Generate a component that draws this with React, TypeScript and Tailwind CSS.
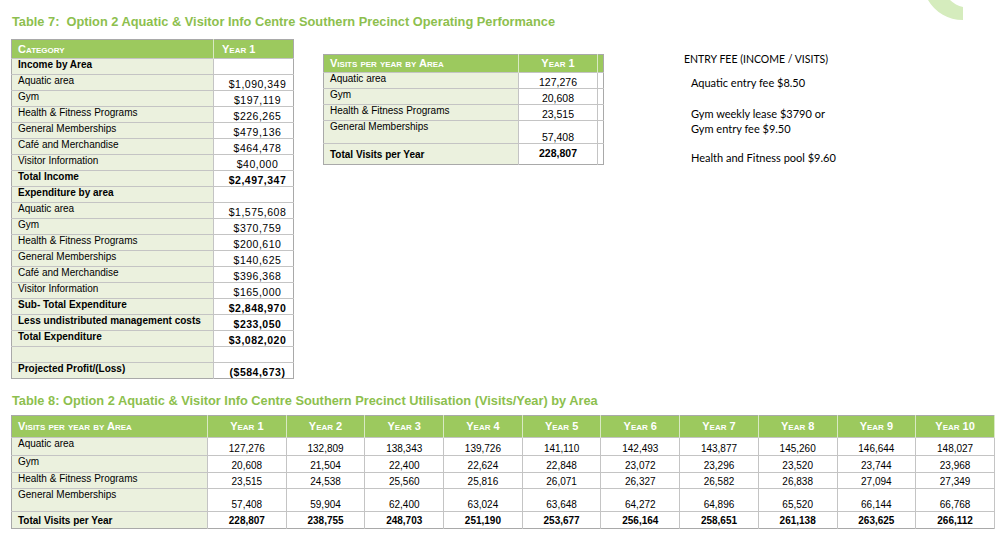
import React from 'react'

const tableFont = { fontFamily: '"Liberation Sans", Arial, sans-serif' }

type Row7 = { label: string; value: string; bold?: boolean }

const rows7: Row7[] = [
    { label: 'Income by Area', value: '', bold: true },
    { label: 'Aquatic area', value: '$1,090,349' },
    { label: 'Gym', value: '$197,119' },
    { label: 'Health & Fitness Programs', value: '$226,265' },
    { label: 'General Memberships', value: '$479,136' },
    { label: 'Café and Merchandise', value: '$464,478' },
    { label: 'Visitor Information', value: '$40,000' },
    { label: 'Total Income', value: '$2,497,347', bold: true },
    { label: 'Expenditure by area', value: '', bold: true },
    { label: 'Aquatic area', value: '$1,575,608' },
    { label: 'Gym', value: '$370,759' },
    { label: 'Health & Fitness Programs', value: '$200,610' },
    { label: 'General Memberships', value: '$140,625' },
    { label: 'Café and Merchandise', value: '$396,368' },
    { label: 'Visitor Information', value: '$165,000' },
    { label: 'Sub- Total Expenditure', value: '$2,848,970', bold: true },
    { label: 'Less undistributed management costs', value: '$233,050', bold: true },
    { label: 'Total Expenditure', value: '$3,082,020', bold: true },
    { label: '', value: '' },
    { label: 'Projected Profit/(Loss)', value: '($584,673)', bold: true },
]

const visitRows = [
    { label: 'Aquatic area', h: 'h-[18px]', v: ['127,276', '132,809', '138,343', '139,726', '141,110', '142,493', '143,877', '145,260', '146,644', '148,027'] },
    { label: 'Gym', h: 'h-[17px]', v: ['20,608', '21,504', '22,400', '22,624', '22,848', '23,072', '23,296', '23,520', '23,744', '23,968'] },
    { label: 'Health & Fitness Programs', h: 'h-[16px]', v: ['23,515', '24,538', '25,560', '25,816', '26,071', '26,327', '26,582', '26,838', '27,094', '27,349'] },
    { label: 'General Memberships', h: 'h-[23px]', v: ['57,408', '59,904', '62,400', '63,024', '63,648', '64,272', '64,896', '65,520', '66,144', '66,768'] },
]

const totals = ['228,807', '238,755', '248,703', '251,190', '253,677', '256,164', '258,651', '261,138', '263,625', '266,112']

function Corner() {
    return (
        <svg className="absolute top-0 right-0" width="100" height="30" viewBox="900 0 100 30">
            <path d="M 928 0 A 40 40 0 0 0 963 20 L 963 7 A 27 27 0 0 1 950 0 Z" fill="#d5ecbd" />
        </svg>
    )
}

function Table7() {
    return (
        <table className="w-[282px] border-collapse table-fixed border border-[#a9a9a9] text-[10px] text-black" style={tableFont}>
            <colgroup>
                <col className="w-[202px]" />
                <col className="w-[80px]" />
            </colgroup>
            <thead>
                <tr className="h-[19px] bg-[#9cc95e] text-white font-bold text-[11px] [font-variant:small-caps]">
                    <th className="text-left pl-[6px] border-r border-[#d9e9c4]">Category</th>
                    <th className="text-left pl-[8px]">Year 1</th>
                </tr>
            </thead>
            <tbody>
                {rows7.map((r, i) => (
                    <tr key={i} className={`h-[16px] border-t border-[#c4c4c4] ${r.bold ? 'font-bold' : ''}`}>
                        <td className="bg-[#ebf1de] align-top pl-[6px] leading-[12px] border-r border-[#c4c4c4] whitespace-nowrap">{r.label}</td>
                        <td className="bg-white align-bottom text-center leading-[12px] pl-[8px] text-[10.5px] tracking-[0.5px]">{r.value}</td>
                    </tr>
                ))}
            </tbody>
        </table>
    )
}

function VisitsSmall() {
    return (
        <table className="w-[280px] border-collapse table-fixed border border-[#a9a9a9] text-[10px] text-black" style={tableFont}>
            <colgroup>
                <col className="w-[195px]" />
                <col className="w-[79px]" />
                <col className="w-[6px]" />
            </colgroup>
            <thead>
                <tr className="h-[18px] bg-[#9cc95e] text-white font-bold text-[11px] [font-variant:small-caps]">
                    <th className="text-left pl-[6px] border-r border-[#d9e9c4]">Visits per year by Area</th>
                    <th className="text-center border-r border-[#d9e9c4]">Year 1</th>
                    <th></th>
                </tr>
            </thead>
            <tbody>
                {visitRows.map((r, i) => (
                    <tr key={i} className={`${i === 3 ? 'h-[23px]' : 'h-[16px]'} border-t border-[#c4c4c4]`}>
                        <td className="bg-[#ebf1de] align-top pl-[6px] leading-[12px] border-r border-[#c4c4c4] whitespace-nowrap">{r.label}</td>
                        <td className="bg-white align-bottom text-center leading-[12px] text-[10.5px] border-r border-[#c4c4c4]">{r.v[0]}</td>
                        <td className="bg-white"></td>
                    </tr>
                ))}
                <tr className="h-[21px] border-t border-[#c4c4c4] font-bold">
                    <td className="bg-[#ebf1de] align-middle pl-[6px] border-r border-[#c4c4c4]">Total Visits per Year</td>
                    <td className="bg-white align-middle text-center text-[10.5px] border-r border-[#c4c4c4]">{totals[0]}</td>
                    <td className="bg-white"></td>
                </tr>
            </tbody>
        </table>
    )
}

function Table8() {
    const years = ['Year 1', 'Year 2', 'Year 3', 'Year 4', 'Year 5', 'Year 6', 'Year 7', 'Year 8', 'Year 9', 'Year 10']
    return (
        <table className="w-[984px] border-collapse table-fixed border border-[#a9a9a9] text-[10px] text-black" style={tableFont}>
            <colgroup>
                <col className="w-[196px]" />
                {years.map((y) => (
                    <col key={y} />
                ))}
            </colgroup>
            <thead>
                <tr className="h-[22px] bg-[#9cc95e] text-white font-bold text-[11px] [font-variant:small-caps]">
                    <th className="text-left pl-[6px] border-r border-[#d9e9c4]">Visits per year by Area</th>
                    {years.map((y) => (
                        <th key={y} className="text-center border-r border-[#d9e9c4]">{y}</th>
                    ))}
                </tr>
            </thead>
            <tbody>
                {visitRows.map((r) => (
                    <tr key={r.label} className={`${r.h} border-t border-[#c4c4c4]`}>
                        <td className="bg-[#ebf1de] align-top pl-[6px] leading-[12px] border-r border-[#c4c4c4] whitespace-nowrap">{r.label}</td>
                        {r.v.map((v, j) => (
                            <td key={j} className="bg-white align-bottom text-center leading-[13px] border-r border-[#c4c4c4]">{v}</td>
                        ))}
                    </tr>
                ))}
                <tr className="h-[17px] border-t border-[#c4c4c4] font-bold">
                    <td className="bg-[#ebf1de] align-middle pl-[6px] border-r border-[#c4c4c4]">Total Visits per Year</td>
                    {totals.map((v, j) => (
                        <td key={j} className="bg-white align-middle text-center border-r border-[#c4c4c4]">{v}</td>
                    ))}
                </tr>
            </tbody>
        </table>
    )
}

export default function App() {
    return (
        <div className="w-[1000px] h-[541px] bg-white relative overflow-hidden">
            <Corner />
            <div className="pl-[11px] pt-[14px]">
                <h2 className="text-[12.8px] font-bold text-[#8dbf4e] leading-[16px] pl-[1px]" style={tableFont}>
                    Table 7:&nbsp; Option 2 Aquatic &amp; Visitor Info Centre Southern Precinct Operating Performance
                </h2>
                <div className="flex items-start mt-[9px]">
                    <Table7 />
                    <div className="ml-[29px] mt-[15px]">
                        <VisitsSmall />
                    </div>
                    <div className="ml-[80px] mt-[13px] text-[11px] text-black leading-[15px]" style={{ fontFamily: 'Lato, "Open Sans", sans-serif' }}>
                        <div className="text-[10.5px]">ENTRY FEE (INCOME / VISITS)</div>
                        <div className="pl-[7px] mt-[8px]">Aquatic entry fee $8.50</div>
                        <div className="pl-[7px] mt-[16px]">Gym weekly lease $3790 or</div>
                        <div className="pl-[7px]">Gym entry fee $9.50</div>
                        <div className="pl-[7px] mt-[14px]">Health and Fitness pool $9.60</div>
                    </div>
                </div>
                <h2 className="mt-[14px] text-[12.8px] font-bold text-[#8dbf4e] leading-[16px] pl-[1px]" style={tableFont}>
                    Table 8: Option 2 Aquatic &amp; Visitor Info Centre Southern Precinct Utilisation (Visits/Year) by Area
                </h2>
                <div className="mt-[6px]">
                    <Table8 />
                </div>
            </div>
        </div>
    )
}
